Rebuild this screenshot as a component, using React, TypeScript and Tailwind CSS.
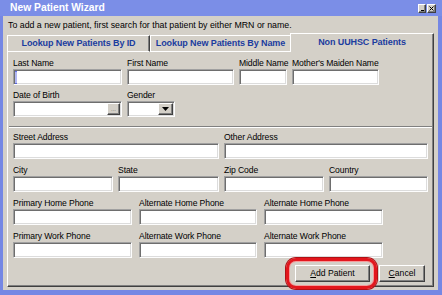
import React from "react";

const sunken =
  "bg-white border border-t-[#a0a0a0] border-l-[#a0a0a0] border-b-[#fdfdfd] border-r-[#fdfdfd] shadow-[inset_1px_1px_0_#6e6e6e,inset_-1px_-1px_0_#dcdcdc]";
const raised =
  "bg-[#d4d0c8] border border-t-[#ffffff] border-l-[#ffffff] border-b-[#404040] border-r-[#404040] shadow-[inset_-1px_-1px_0_#808080]";

function Label({ text }: { text: string }) {
  return (
    <div className="h-[11px] leading-[11px] text-[8.6px] tracking-[-0.1px] whitespace-nowrap text-black">
      {text}
    </div>
  );
}

function Field({
  label,
  w,
  children,
}: {
  label: string;
  w: string;
  children?: React.ReactNode;
}) {
  return (
    <div className={`flex flex-col ${w}`}>
      <Label text={label} />
      <div className={`relative h-[16px] ${sunken}`}>{children}</div>
    </div>
  );
}

export default function App() {
  return (
    <div className="w-[442px] h-[295px] bg-[#7587e4] flex flex-col font-['Liberation_Sans',Arial,sans-serif] text-black select-none overflow-hidden">
      {/* Title bar */}
      <div className="h-[16px] bg-[#7b8ee7] flex items-center justify-between pl-[10px] pr-[6px]">
        <span className="text-white font-bold text-[10.3px] leading-[16px]">
          New Patient Wizard
        </span>
        <div className="flex gap-[1px] items-center">
          <div className={`w-[8px] h-[9px] ${raised} flex items-end justify-center pb-[1px]`}>
            <div className="w-[3px] h-[1px] bg-black" />
          </div>
          <div className={`w-[9px] h-[9px] ${raised} flex items-center justify-center`}>
            <svg width="5" height="5" viewBox="0 0 5 5">
              <path d="M0.5 0.5 L4.5 4.5 M4.5 0.5 L0.5 4.5" stroke="#000" strokeWidth="1" />
            </svg>
          </div>
        </div>
      </div>

      {/* Body */}
      <div className="flex-1 ml-[3px] mr-[4px] mb-[5px] bg-[#d4d0c8] flex flex-col px-[4px] pt-[4px] pb-[3px]">
        <div className="ml-[1px] h-[11px] leading-[11px] text-[8.8px] whitespace-nowrap">
          To add a new patient, first search for that patient by either MRN or name.
        </div>

        {/* Tabs */}
        <div className="mt-[2px] h-[19px] flex items-end">
          <div className="w-[143px] h-[17px] flex items-center justify-center border-t border-l border-b border-t-[#ffffff] border-l-[#ffffff] border-b-[#ffffff] border-r border-r-[#404040] shadow-[inset_-1px_0_0_#808080] text-[9px] tracking-[-0.1px] font-bold text-[#1b3c9f] whitespace-nowrap">
            Lookup New Patients By ID
          </div>
          <div className="w-[140px] h-[17px] flex items-center justify-center border-t border-l border-b border-t-[#ffffff] border-l-[#ffffff] border-b-[#ffffff] text-[9px] tracking-[-0.1px] font-bold text-[#1b3c9f] whitespace-nowrap">
            Lookup New Patients By Name
          </div>
          <div className="w-[144px] h-[19px] flex items-center justify-center border-t border-l border-r border-t-[#ffffff] border-l-[#ffffff] border-r-[#404040] shadow-[inset_-1px_0_0_#808080] text-[9px] tracking-[-0.1px] font-bold text-[#1b3c9f] whitespace-nowrap">
            Non UUHSC Patients
          </div>
        </div>

        {/* Panel */}
        <div className="flex-1 w-[427px] border-l border-r border-b border-l-[#ffffff] border-r-[#404040] border-b-[#404040] shadow-[inset_-1px_-1px_0_#808080] pt-[6px] flex flex-col">
          <div className="pl-[5px] flex flex-col">
            {/* Row 1 */}
            <div className="flex gap-[5px]">
              <Field label="Last Name" w="w-[109px]">
                <svg className="absolute left-[1px] top-[1px]" width="3" height="13" viewBox="0 0 3 13">
                  <path d="M0 0.5 H2 M1 1 V12 M0 12.5 H2" stroke="#2233dd" strokeWidth="1" opacity="0.7" />
                </svg>
              </Field>
              <Field label="First Name" w="w-[107px]" />
              <Field label="Middle Name" w="w-[48px]" />
              <Field label="Mother's Maiden Name" w="w-[87px]" />
            </div>

            {/* Row 2 */}
            <div className="flex gap-[5px] mt-[5px]">
              <div className="flex flex-col w-[109px]">
                <Label text="Date of Birth" />
                <div className={`h-[16px] ${sunken} flex justify-end p-[1px]`}>
                  <div className={`w-[13px] h-full ${raised} flex items-center justify-center text-[6px] leading-none text-[#606060] pb-[1px]`}>
                    ...
                  </div>
                </div>
              </div>
              <div className="flex flex-col w-[48px]">
                <Label text="Gender" />
                <div className={`h-[16px] ${sunken} flex justify-end p-[1px]`}>
                  <div className={`w-[15px] h-full ${raised} flex items-center justify-center`}>
                    <svg width="7" height="4" viewBox="0 0 7 4">
                      <path d="M0 0 H7 L3.5 4 Z" fill="#000" />
                    </svg>
                  </div>
                </div>
              </div>
            </div>
          </div>

          {/* Separator */}
          <div className="mt-[9px] mb-[4px] mx-[1px] h-[2px] border-t border-b border-t-[#808080] border-b-[#ffffff]" />

          <div className="pl-[5px] flex flex-col gap-[6px]">
            <div className="flex gap-[5px]">
              <Field label="Street Address" w="w-[206px]" />
              <Field label="Other Address" w="w-[204px]" />
            </div>
            <div className="flex gap-[5px]">
              <Field label="City" w="w-[100px]" />
              <Field label="State" w="w-[101px]" />
              <Field label="Zip Code" w="w-[100px]" />
              <Field label="Country" w="w-[99px]" />
            </div>
            <div className="flex gap-[7px]">
              <Field label="Primary Home Phone" w="w-[119px]" />
              <Field label="Alternate Home Phone" w="w-[118px]" />
              <Field label="Alternate Home Phone" w="w-[119px]" />
            </div>
            <div className="flex gap-[7px]">
              <Field label="Primary Work Phone" w="w-[119px]" />
              <Field label="Alternate Work Phone" w="w-[118px]" />
              <Field label="Alternate Work Phone" w="w-[119px]" />
            </div>
          </div>

          {/* Buttons */}
          <div className="mt-[7px] flex justify-end gap-[9px] pr-[8px]">
            <div className="relative">
              <div className={`w-[75px] h-[17px] ${raised} flex items-center justify-center text-[8.6px] leading-none`}>
                <span>
                  <span className="underline">A</span>dd Patient
                </span>
              </div>
              <div className="absolute -left-[9px] -right-[7px] -top-[7px] -bottom-[7px] rounded-[10px] border-[3px] border-[#e3161d] shadow-[inset_0_0_0_1px_#f59a9a,0_0_0_1px_#b01015] pointer-events-none" />
            </div>
            <div className={`w-[46px] h-[17px] ${raised} flex items-center justify-center text-[8.6px] leading-none`}>
              <span>
                <span className="underline">C</span>ancel
              </span>
            </div>
          </div>
        </div>
      </div>
    </div>
  );
}
